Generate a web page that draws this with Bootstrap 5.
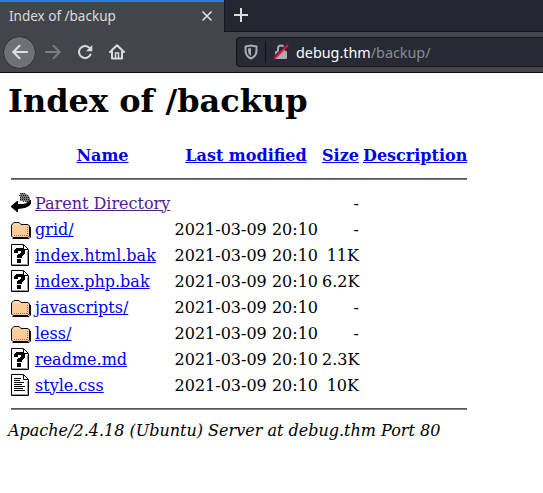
<!DOCTYPE html>
<html lang="en">
<head>
<meta charset="utf-8">
<title>Index of /backup</title>
<link href="https://cdn.jsdelivr.net/npm/bootstrap@5.3.0/dist/css/bootstrap.min.css" rel="stylesheet">
<style>
body{font-family:"DejaVu Serif",serif;font-size:16px;line-height:19px;color:#000;background:#fff;overflow:hidden}
.chrome{height:73px;background:#42454c;border-bottom:1px solid #0c0c0f;font-family:"Noto Sans",sans-serif;color:#dcdcda}
.tabs{height:32px}
.tab-on{width:224px;height:32px;border-top:2px solid #2a7af5;padding:0 11px 0 9px;font-size:13.5px;line-height:28px}
.tab-on span{margin-top:-2px}
.tab-on svg{margin-top:-2px}
.tab-rest{background:#23252f;border-left:1px solid #14151d;border-bottom:1px solid #14151d;padding-left:8px}
.tab-rest svg{margin-top:-1px}
.tools{height:40px}
.tools svg,.tabs svg{display:block;flex:none}
.back{width:33px;height:33px;border-radius:50%;background:#707176;border:1px solid #2c2d32;margin-left:3px}
.reload{margin-left:15px}
.home{margin-left:16px}
.urlbar{height:30px;margin-left:111px;background:#272935;border:1px solid #101119;border-right:0;border-radius:4px 0 0 4px;font-size:14.35px}
.shield{margin-left:7px}
.split{width:1px;height:22px;background:#101119;margin:0 7px 0 7px}
.host{margin-left:7px}
.path{color:#8c8c8c}
h1{font-size:32px;font-weight:700;line-height:38px;margin:9px 0 0 8px}
.listing{width:456px;table-layout:fixed;margin:22px 0 0 11px;border-collapse:collapse}
.listing td,.listing th{padding:0 4px 0 0;height:26px;vertical-align:middle;white-space:nowrap}
.listing th{padding-bottom:2px;height:28px}
.listing td:last-child,.listing th:last-child{padding-right:0}
.listing svg{display:block}
.listing .rule{height:20px;padding:0 0 2px}
.listing .rule.foot{padding:2px 0 0}
.rule div{height:2px;background:linear-gradient(#555 50%,#808080 50%)}
a{color:#00e;text-decoration:underline}
a.seen{color:#551a8b}
address{margin:3px 0 0 8px;font-style:italic;line-height:19px}
</style>
<script src="https://cdn.jsdelivr.net/npm/bootstrap@5.3.0/dist/js/bootstrap.bundle.min.js"></script>
</head>
<body>
<svg width="0" height="0" class="position-absolute" aria-hidden="true">
<defs>
<g id="page"><path d="M.5.5H12.500L17.500 5.500V21.500H.5Z" fill="#fff" stroke="#000"/><path d="M12.500 1V5.500H17" fill="none" stroke="#000"/><path d="M1 20.500H16.500V7" fill="none" stroke="#999"/></g>
<g id="unknown"><use href="#page"/><path d="M3 6H4V5H5V4H12V5H13V6H14V10H13V11H12V12H11V14H6V11H7V10H9V9H10V7H7V9H3ZM6 15H10V19H6Z" fill="#000"/></g>
<g id="text"><use href="#page"/><path d="M3 4.500H10M3 6.500H9M3 8.500H13M3 10.500H11M3 12.500H14M3 14.500H12M3 16.500H14" stroke="#000"/></g>
<g id="folder" transform="translate(0 2)"><path d="M1 5V4L3 2H8L10 4H17L19 6V17H2L1 16Z" fill="#fc9"/><path d="M1.500 18.500H18L19.500 17V7" fill="none" stroke="#000"/><path d="M.5 5V16L2 17.500H17L18.500 16V6L17 4.500H10L8 2.500H3L.5 5" fill="none" stroke="#000"/><path d="M2 5.500L3.500 4H7.500L9 5.500" fill="none" stroke="#ffe8cc"/><path d="M3 15.500H17M16.500 7V16" fill="none" stroke="#a65" stroke-dasharray="1 1"/></g>
<g id="up"><path d="M9 1H13L17 3L19 6V11H16L14 9H9Z" fill="#777"/><path d="M9 1.500H14M8 3.500H17M9 5.500H19M9 7.500H19M12 9.500H19" stroke="#222" stroke-dasharray="1 1"/><path d="M20 8V12L18 14L14 16L7 17V20H6L0 15V14L6 9H7V12H12L16 11L19 8Z" fill="#000"/></g>
</defs>
</svg>
<header class="chrome">
 <div class="tabs d-flex">
  <div class="tab-on d-flex align-items-center justify-content-between"><span>Index of /backup</span><svg width="12" height="12" viewBox="0 0 12 12"><path d="M2 2L10 10M10 2L2 10" stroke="#dcdcda" stroke-width="1.700" stroke-linecap="round"/></svg></div>
  <div class="tab-rest flex-grow-1 d-flex align-items-center"><svg width="16" height="16" viewBox="0 0 16 16"><path d="M8 1V15M1 8H15" stroke="#dcdcda" stroke-width="2"/></svg></div>
 </div>
 <div class="tools d-flex align-items-center">
  <div class="back d-flex align-items-center justify-content-center"><svg width="16" height="16" viewBox="0 0 16 16"><path d="M15 8H1M7.500 1.800L1.300 8L7.500 14.200" fill="none" stroke="#e0e0de" stroke-width="2" stroke-linecap="round" stroke-linejoin="round"/></svg></div>
  <svg class="ms-2" width="18" height="16" viewBox="0 0 18 16"><path d="M2 8H16M9.500 1.800L15.700 8L9.500 14.200" fill="none" stroke="#7c7d82" stroke-width="2" stroke-linecap="round" stroke-linejoin="round"/></svg>
  <svg class="reload" width="16" height="16" viewBox="0 0 16 16"><path d="M12 3.500A6 6 0 1 0 13.500 10.500" fill="none" stroke="#dcdcda" stroke-width="2" stroke-linecap="round"/><path d="M15.300 1V7.300H9Z" fill="#dcdcda"/></svg>
  <svg class="home" width="16" height="16" viewBox="0 0 16 16"><path d="M1 8L8 1.300L15 8M3 7V14.500H13V7" fill="none" stroke="#dcdcda" stroke-width="2" stroke-linecap="round" stroke-linejoin="round"/><path d="M6.500 14V9H9.500V14" fill="none" stroke="#dcdcda" stroke-width="1.500"/></svg>
  <div class="urlbar flex-grow-1 d-flex align-items-center">
   <svg class="shield" width="14" height="16" viewBox="0 0 14 16"><path d="M7 1.500L12.500 2.500V6.500C12.500 10.500 10.500 13 7 14.500C3.500 13 1.500 10.500 1.500 6.500V2.500Z" fill="none" stroke="#aaaab0" stroke-width="2" stroke-linejoin="round"/><path d="M7 4V12C5 11 4 9 4 6.500V4.500Z" fill="#aaaab0"/></svg>
   <span class="split"></span>
   <svg width="16" height="16" viewBox="0 0 16 16"><path d="M5 8V4.500A3 3 0 0 1 11 4.500V8" fill="none" stroke="#aaaab0" stroke-width="2"/><rect x="2" y="7" width="12" height="8" rx="1" fill="#aaaab0"/><path d="M1.500 12.500L12.500 1.500" stroke="#272935" stroke-width="1.500"/><path d="M1.500 14.500L14.500 1.500" stroke="#e6103c" stroke-width="2" stroke-linecap="round"/></svg>
   <span class="host text-nowrap"><span class="text-white">debug.thm</span><span class="path">/backup/</span></span>
  </div>
 </div>
</header>
<main>
<h1>Index of /backup</h1>
<table class="listing">
<colgroup><col style="width:24px"><col style="width:139px"><col style="width:148px"><col style="width:41px"><col style="width:104px"></colgroup>
<tr class="text-center"><th></th><th><a href="#">Name</a></th><th><a href="#">Last modified</a></th><th><a href="#">Size</a></th><th><a href="#">Description</a></th></tr>
<tr><td colspan="5" class="rule"><div></div></td></tr>
<tr><td><svg width="20" height="22"><use href="#up"/></svg></td><td><a class="seen" href="#">Parent Directory</a></td><td></td><td class="text-end">-</td><td></td></tr>
<tr><td><svg width="20" height="22"><use href="#folder"/></svg></td><td><a href="#">grid/</a></td><td class="text-end">2021-03-09 20:10</td><td class="text-end">-</td><td></td></tr>
<tr><td><svg width="20" height="22"><use href="#unknown"/></svg></td><td><a href="#">index.html.bak</a></td><td class="text-end">2021-03-09 20:10</td><td class="text-end">11K</td><td></td></tr>
<tr><td><svg width="20" height="22"><use href="#unknown"/></svg></td><td><a href="#">index.php.bak</a></td><td class="text-end">2021-03-09 20:10</td><td class="text-end">6.2K</td><td></td></tr>
<tr><td><svg width="20" height="22"><use href="#folder"/></svg></td><td><a href="#">javascripts/</a></td><td class="text-end">2021-03-09 20:10</td><td class="text-end">-</td><td></td></tr>
<tr><td><svg width="20" height="22"><use href="#folder"/></svg></td><td><a href="#">less/</a></td><td class="text-end">2021-03-09 20:10</td><td class="text-end">-</td><td></td></tr>
<tr><td><svg width="20" height="22"><use href="#unknown"/></svg></td><td><a href="#">readme.md</a></td><td class="text-end">2021-03-09 20:10</td><td class="text-end">2.3K</td><td></td></tr>
<tr><td><svg width="20" height="22"><use href="#text"/></svg></td><td><a href="#">style.css</a></td><td class="text-end">2021-03-09 20:10</td><td class="text-end">10K</td><td></td></tr>
<tr><td colspan="5" class="rule foot"><div></div></td></tr>
</table>
<address>Apache/2.4.18 (Ubuntu) Server at debug.thm Port 80</address>
</main>
</body>
</html>
